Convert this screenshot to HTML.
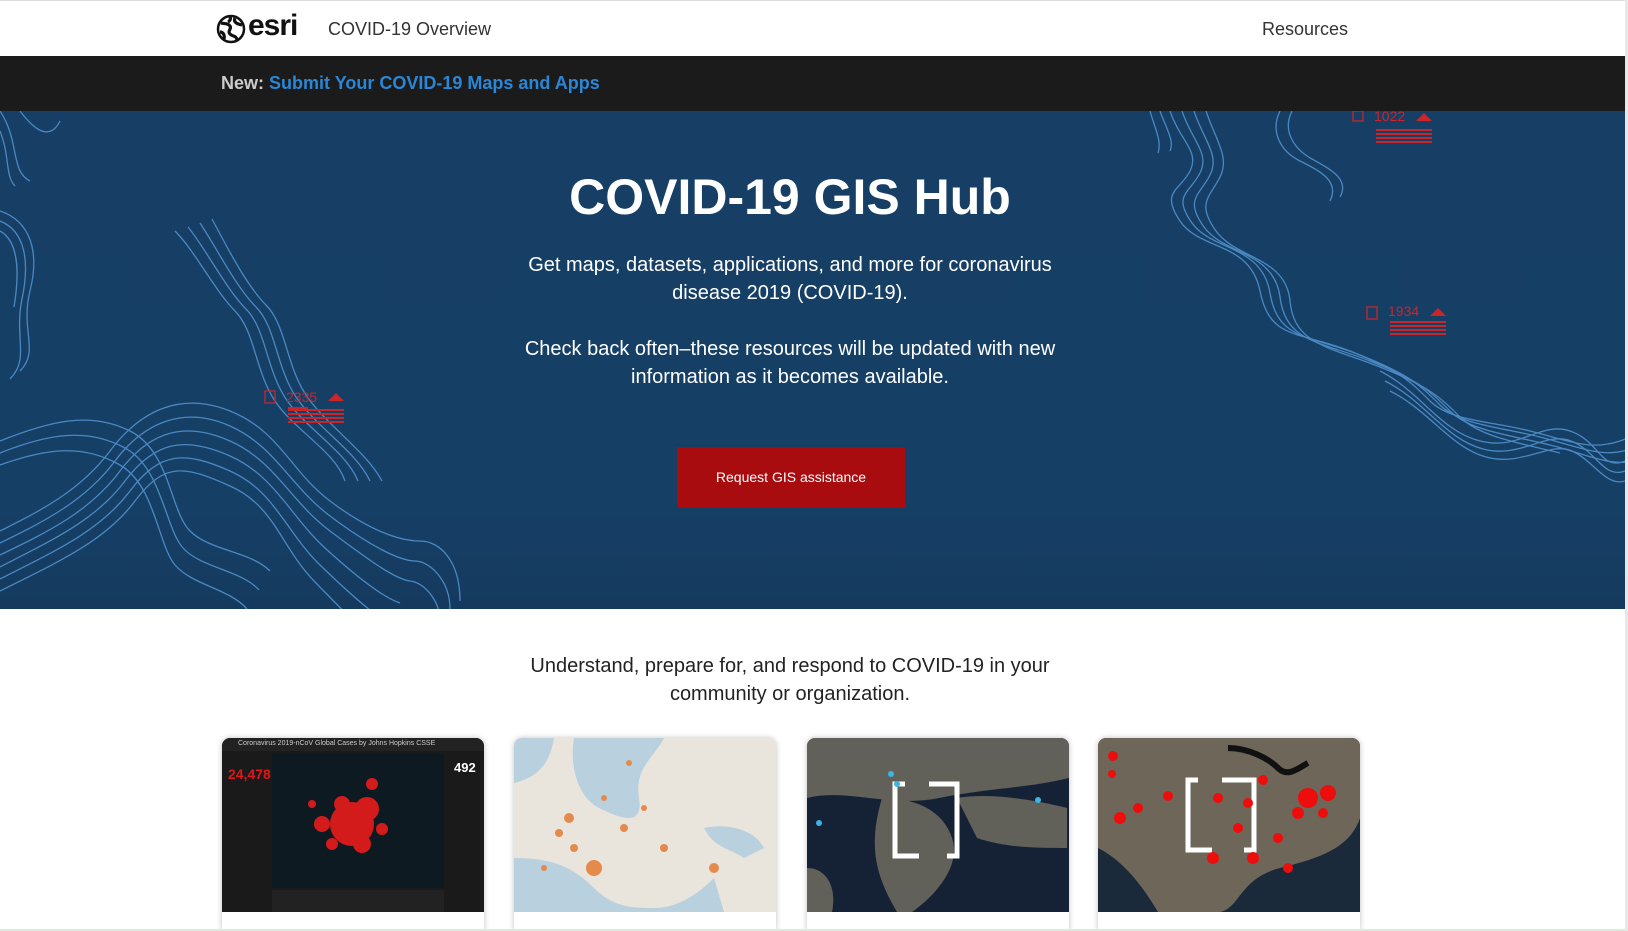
<!DOCTYPE html>
<html><head><meta charset="utf-8"><style>
*{margin:0;padding:0;box-sizing:border-box}
body{width:1628px;height:931px;overflow:hidden;background:#fff;font-family:"Liberation Sans",sans-serif;position:relative}
.hdr{position:absolute;top:0;left:0;width:1625px;height:56px;background:#fff;border-top:1px solid #ddd}
.dark{position:absolute;top:56px;left:0;width:1625px;height:55px;background:#1b1b1b}
.hero{position:absolute;top:111px;left:0;width:1625px;height:498px;background:linear-gradient(#173f66 0%,#163f66 80%,#153a5e 100%);overflow:hidden}
.sb{position:absolute;right:0;top:0;width:3px;height:931px;background:#e8e8e8}
.c{position:absolute;text-align:center;color:#fff}
.card{position:absolute;top:738px;width:262px;height:193px;border-radius:8px 8px 0 0;overflow:hidden;box-shadow:0 0 6px rgba(0,0,0,.25);background:#fff}
.card .im{position:absolute;top:0;left:0;width:262px;height:174px;overflow:hidden}
</style></head><body>
<div class="hdr">
 <svg style="position:absolute;left:216px;top:13px" width="30" height="30" viewBox="0 0 30 30"><circle cx="15" cy="15" r="13" fill="#fff" stroke="#111" stroke-width="2.5"/><path d="M5 9c4 1 7 0 9 3s-3 5 0 8 6 1 7 6M19 4c-2 4 2 6 7 7M4 18c3 0 5 3 4 7M14 3c1 2 0 4-2 5" stroke="#111" stroke-width="3.2" fill="none"/></svg>
 <div style="position:absolute;left:248px;top:8px;font-size:30px;font-weight:bold;color:#111;letter-spacing:-1px">esri</div>
 <div style="position:absolute;left:328px;top:18px;font-size:18px;color:#333">COVID-19 Overview</div>
 <div style="position:absolute;left:1262px;top:18px;font-size:18px;color:#333">Resources</div>
</div>
<div class="dark"><div style="position:absolute;left:221px;top:17px;font-size:18px;font-weight:bold;color:#ccc">New: <span style="color:#2a86d6">Submit Your COVID-19 Maps and Apps</span></div></div>
<div class="hero">
<svg width="1625" height="498" style="position:absolute;left:0;top:0" fill="none" stroke="#4a88c2" stroke-width="1.3">
<g>
<path d="M0 420c40-20 80-40 110-80s70-60 120-40 60 60 100 90 70 40 90 40 40 20 40 60"/>
<path d="M0 432c45-22 85-42 115-82s70-55 115-35 60 60 100 90 70 45 85 45 35 20 35 48"/>
<path d="M0 444c50-24 90-44 120-84s65-50 110-30 60 60 100 90 65 48 80 50 30 20 30 40"/>
<path d="M0 456c50-26 95-46 125-86s60-45 105-25 60 60 95 92 60 50 75 55"/>
<path d="M0 468c55-28 100-48 130-88s55-40 100-20 55 60 90 94 55 50 70 60"/>
<path d="M0 480c60-30 105-50 135-90s50-35 95-15 50 60 85 96 50 50 60 65"/>
<path d="M0 330c50-20 90-30 130-10s40 80 60 100 60 20 80 40"/>
<path d="M0 342c50-20 88-25 125-5s40 80 58 100 58 22 76 42"/>
<path d="M0 354c50-18 85-20 120 0s38 80 55 100 55 24 72 44"/>
<path d="M175 120c20 20 40 60 60 80s20 60 40 90 60 50 70 80"/>
<path d="M188 116c18 22 38 62 58 82s20 60 40 90 60 52 72 82"/>
<path d="M200 112c16 24 36 64 56 84s20 60 40 90 60 54 74 84"/>
<path d="M212 108c14 26 34 66 54 86s20 60 40 90 60 56 76 86"/>
<path d="M0 0c20 30 10 60 30 70M0 20c10 25 5 45 15 55M20 0c15 20 30 30 40 10"/>
<path d="M0 100c30 10 40 40 30 80s10 60-10 80M0 110c25 10 30 40 22 78s8 60-12 80M0 120c18 10 20 40 14 76"/>
<path d="M1170 0c10 30 30 40 20 60s-30 20-10 50 70 20 80 70 40 40 90 60 60 30 80 50 60 20 100 30 60 20 90 10 30-30 20-60"/>
<path d="M1182 0c10 30 28 42 18 62s-28 22-8 50 70 22 78 70 40 42 90 62 60 30 80 50 60 22 100 32 62 22 90 12"/>
<path d="M1194 0c10 30 26 44 16 64s-26 24-6 52 70 24 76 70 40 44 90 64 60 30 80 50 60 24 100 34 64 24 90 14"/>
<path d="M1206 0c10 30 24 46 14 66s-24 26-4 54 70 26 74 70 40 46 90 66 60 30 80 50 60 26 100 36"/>
<path d="M1280 0c-10 20 0 40 20 50s40 20 30 40M1292 0c-10 20 2 38 20 48s38 20 28 38"/>
<path d="M1380 260c40 20 60 60 100 70s60-20 90-10 30 40 55 30M1385 270c40 20 60 58 98 68s62-18 88-8 32 38 54 30M1390 280c40 20 60 56 96 66s64-16 86-6 34 36 53 30"/>
<path d="M1160 0c5 15 15 30 10 40M1150 0c5 18 12 30 8 42"/>
</g>
<g stroke="#c9252b" fill="none"><rect x="265" y="280" width="10" height="12"/><rect x="1353" y="0" width="10" height="10"/><rect x="1367" y="196" width="10" height="12"/></g>
<g fill="#c9252b" stroke="none">
<path d="M328 290l8-8 8 8z"/><path d="M1416 10l8-8 8 8z"/><path d="M1430 205l8-8 8 8z"/>
<rect x="288" y="298" width="56" height="2"/><rect x="288" y="302" width="56" height="2"/><rect x="288" y="306" width="56" height="2"/><rect x="288" y="310" width="56" height="2"/><rect x="288" y="296" width="20" height="4"/>
<rect x="1376" y="18" width="56" height="2"/><rect x="1376" y="22" width="56" height="2"/><rect x="1376" y="26" width="56" height="2"/><rect x="1376" y="30" width="56" height="2"/>
<rect x="1390" y="210" width="56" height="2"/><rect x="1390" y="214" width="56" height="2"/><rect x="1390" y="218" width="56" height="2"/><rect x="1390" y="222" width="56" height="2"/>
<text x="286" y="291" font-size="14" font-family="Liberation Sans">2335</text>
<text x="1374" y="10" font-size="14" font-family="Liberation Sans">1022</text>
<text x="1388" y="205" font-size="14" font-family="Liberation Sans">1934</text>
</g>
</svg>
<div class="c" style="left:390px;width:800px;top:57px;font-size:50px;font-weight:bold">COVID-19 GIS Hub</div>
<div class="c" style="left:505px;width:570px;top:140px;font-size:20px;line-height:28px">Get maps, datasets, applications, and more for coronavirus disease 2019 (COVID-19).</div>
<div class="c" style="left:490px;width:600px;top:224px;font-size:20px;line-height:28px">Check back often–these resources will be updated with new information as it becomes available.</div>
<div style="position:absolute;left:677px;top:336px;width:228px;height:61px;background:#a80c0f;color:#fff;font-size:14px;text-align:center;line-height:61px">Request GIS assistance</div>
</div>
<div style="position:absolute;left:490px;width:600px;top:652px;text-align:center;font-size:20px;line-height:28px;color:#222">Understand, prepare for, and respond to COVID-19 in your community or organization.</div>

<div class="card" style="left:222px"><div class="im" style="background:#1a1a1a">
<div style="position:absolute;left:0;top:0;width:262px;height:13px;background:#222;color:#ccc;font-size:7px;padding:2px 16px">Coronavirus 2019-nCoV Global Cases by Johns Hopkins CSSE</div>
<div style="position:absolute;left:50px;top:16px;width:172px;height:134px;background:#0e1a22"></div>
<div style="position:absolute;left:6px;top:28px;color:#e0161b;font-size:14px;font-weight:bold">24,478</div>
<div style="position:absolute;left:232px;top:22px;color:#fff;font-size:13px;font-weight:bold">492</div>
<svg style="position:absolute;left:50px;top:16px" width="172" height="134"><g fill="#d41b1b"><circle cx="80" cy="70" r="22"/><circle cx="95" cy="55" r="12"/><circle cx="70" cy="50" r="8"/><circle cx="50" cy="70" r="8"/><circle cx="90" cy="90" r="9"/><circle cx="60" cy="90" r="6"/><circle cx="100" cy="30" r="6"/><circle cx="40" cy="50" r="4"/><circle cx="110" cy="75" r="6"/></g></svg>
<div style="position:absolute;left:50px;top:152px;width:172px;height:22px;background:#222"></div>
</div></div>

<div class="card" style="left:514px"><div class="im" style="background:#e9e5dc">
<svg width="262" height="174"><g fill="#b9d0de"><path d="M60 0h90c-10 20-30 30-25 60s-20 20-40 10-30-40-25-70z"/><path d="M0 120c40 0 60 10 80 30s40 20 60 20 40-10 60-30l10 34H0z"/><path d="M190 90c20-5 50 0 60 20l-20 10c-15-10-30-10-40-30z"/><path d="M0 0h40c-5 30-20 40-40 45z"/></g>
<g fill="#e48a4c"><circle cx="80" cy="130" r="8"/><circle cx="45" cy="95" r="4"/><circle cx="55" cy="80" r="5"/><circle cx="110" cy="90" r="4"/><circle cx="150" cy="110" r="4"/><circle cx="200" cy="130" r="5"/><circle cx="30" cy="130" r="3"/><circle cx="115" cy="25" r="3"/><circle cx="90" cy="60" r="3"/><circle cx="130" cy="70" r="3"/><circle cx="60" cy="110" r="4"/></g></svg>
</div></div>

<div class="card" style="left:807px"><div class="im" style="background:#152236">
<svg width="262" height="174"><g fill="#6f6b60" opacity=".85"><path d="M0 0h262v40c-40 10-80 10-130 20S40 50 0 60z"/><path d="M75 60c30 0 60 10 70 40s-20 60-40 74H90C70 140 60 110 75 60z"/><path d="M150 60c30-5 70 0 110 10v40c-30 0-60 0-90-10z"/><path d="M0 130c20 0 30 20 25 44H0z"/></g>
<g fill="none" stroke="#fff" stroke-width="5"><path d="M98 46h-10v72h24M122 46h28v72h-10"/></g>
<g fill="#3cb4e6"><circle cx="84" cy="36" r="3"/><circle cx="90" cy="46" r="3"/><circle cx="231" cy="62" r="3"/><circle cx="12" cy="85" r="3"/></g></svg>
</div></div>

<div class="card" style="left:1098px"><div class="im" style="background:#1a2a3a">
<svg width="262" height="174"><path d="M0 0h262v80c-10 30-40 40-80 50s-40 40-60 44H60C40 140 20 120 0 110z" fill="#6e6658"/><path d="M130 10c20 0 40 10 50 20s20 0 30-5" stroke="#111" stroke-width="6" fill="none"/>
<g fill="none" stroke="#fff" stroke-width="5"><path d="M100 42h-10v70h24M124 42h32v70h-10"/></g>
<g fill="#ee0d0d"><circle cx="15" cy="18" r="5"/><circle cx="14" cy="36" r="4"/><circle cx="70" cy="58" r="5"/><circle cx="165" cy="42" r="5"/><circle cx="210" cy="60" r="10"/><circle cx="230" cy="55" r="8"/><circle cx="200" cy="75" r="6"/><circle cx="180" cy="100" r="5"/><circle cx="140" cy="90" r="5"/><circle cx="150" cy="65" r="5"/><circle cx="120" cy="60" r="5"/><circle cx="22" cy="80" r="6"/><circle cx="40" cy="70" r="5"/><circle cx="115" cy="120" r="6"/><circle cx="155" cy="120" r="6"/><circle cx="190" cy="130" r="5"/><circle cx="225" cy="75" r="5"/></g></svg>
</div></div>

<div style="position:absolute;left:0;top:929px;width:1628px;height:2px;background:#dfe9d8"></div>
<div class="sb"></div>
</body></html>
